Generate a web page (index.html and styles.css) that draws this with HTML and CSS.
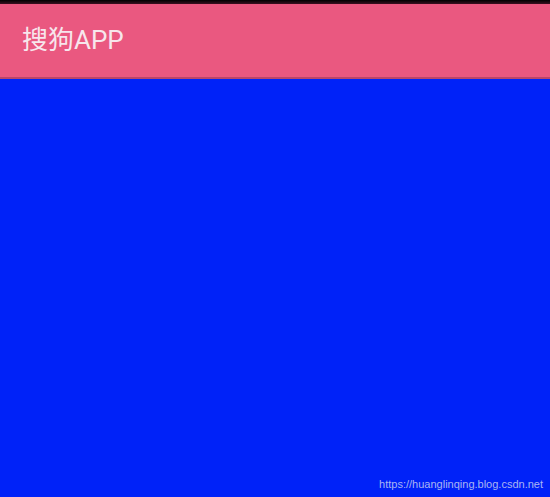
FILE: index.html
```html
<!DOCTYPE html>
<html lang="zh">
<head>
<meta charset="utf-8">
<title>搜狗APP</title>
<link rel="stylesheet" href="styles.css">
</head>
<body>
<div class="screen">
  <div class="status"></div>
  <header class="toolbar">
    <h1 class="title">搜狗APP</h1>
  </header>
  <main class="content">
    <span class="watermark">https://huanglinqing.blog.csdn.net</span>
  </main>
</div>
</body>
</html>
```
FILE: styles.css
```css
html, body {
  margin: 0;
  padding: 0;
  width: 550px;
  height: 497px;
  overflow: hidden;
}
.screen {
  display: flex;
  flex-direction: column;
  width: 550px;
  height: 497px;
  background: #0022f8;
}
.status {
  height: 4px;
  background: linear-gradient(#000, #3a1020);
}
.toolbar {
  height: 73px;
  background: #ea5880;
  border-bottom: 2px solid #b9466a;
  display: flex;
  align-items: center;
  padding-left: 22px;
}
.title {
  margin: 0;
  font-family: Roboto, "Noto Sans CJK SC", sans-serif;
  font-weight: 400;
  font-size: 26px;
  color: #f7e6ec;
  line-height: 1;
  padding-bottom: 2px;
}
.content {
  flex: 1;
  display: flex;
  align-items: flex-end;
  justify-content: flex-end;
  padding: 0 7px 7px 0;
}
.watermark {
  font-family: "Liberation Sans", sans-serif;
  font-size: 11px;
  color: #aab5f2;
}
```
